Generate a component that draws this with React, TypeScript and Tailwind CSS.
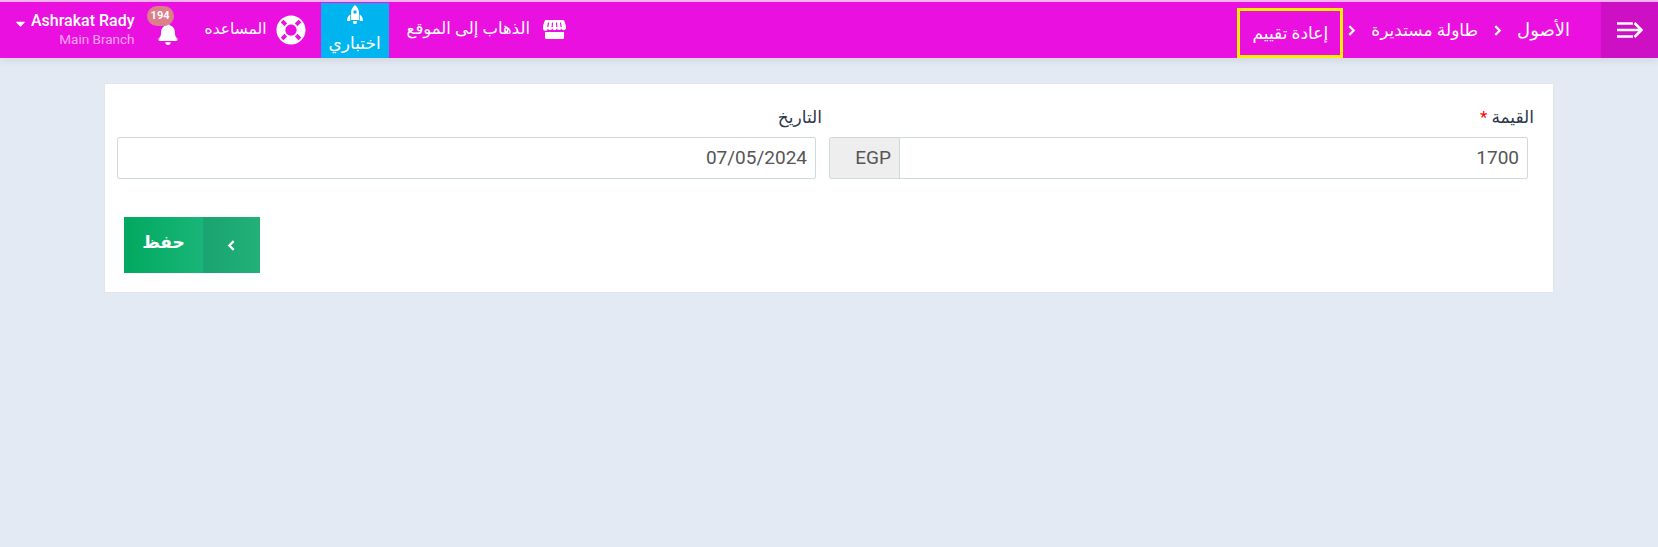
import { FaBell, FaCaretDown, FaLifeRing } from 'react-icons/fa'

const font = "font-['Roboto','Noto_Sans','DejaVu_Sans',sans-serif]"

function Chevron({ dir, size = 11 }: { dir: 'left' | 'right'; size?: number }) {
  return (
    <svg width={size} height={size} viewBox="0 0 10 10" fill="none" stroke="#fff" strokeWidth="2" className="shrink-0">
      <path d={dir === 'right' ? 'M3 1l4 4-4 4' : 'M7 1 3 5l4 4'} />
    </svg>
  )
}

function StoreIcon() {
  return (
    <svg width="23" height="19" viewBox="0 0 23 19" fill="#fff" className="shrink-0">
      <path d="M3 0h17a1.500 1.500 0 0 1 1.300.8L23 6v2.500a2.400 2.400 0 0 1-4.600 0 2.400 2.400 0 0 1-4.500 0 2.400 2.400 0 0 1-4.600 0 2.400 2.400 0 0 1-4.500 0 2.400 2.400 0 0 1-4.800 0V6L1.700.8A1.500 1.500 0 0 1 3 0z" />
      <path d="M2 12h19v5.500a1.500 1.500 0 0 1-1.500 1.500h-16A1.500 1.500 0 0 1 2 17.500z" />
      <path d="M5.500 2.500 4.800 7M9.500 2.500 9.200 7M13.500 2.500l.3 4.500M17.500 2.500l.7 4.500" stroke="#ea10df" strokeWidth="1.200" />
    </svg>
  )
}

function RocketIcon() {
  return (
    <svg width="16" height="20" viewBox="0 0 16 20" fill="#fff" className="shrink-0">
      <path d="M8 0c2.800 2.200 4 5.200 4 8.500V15H4V8.500C4 5.200 5.200 2.200 8 0z" />
      <path d="M3.300 9.500V16H0c0-2.800 1-5 3.300-6.500zM12.700 9.500V16H16c0-2.800-1-5-3.300-6.500z" />
      <path d="M6 16h4l-.6 3H6.600z" />
      <circle cx="8" cy="7" r="1.700" fill="#00b4f0" />
    </svg>
  )
}

function Crumb({ children }: { children: string }) {
  return <span className="text-[17px] leading-none text-white">{children}</span>
}

function Header() {
  return (
    <div className="border-t-2 border-[#f9b5f3] bg-[#ea10df] h-[58px] flex items-stretch shadow-[0_2px_8px_rgba(0,0,0,0.1)] relative">
      {/* Toggle */}
      <div className="w-[57px] bg-[#cd10c3] flex items-center justify-center">
        <svg width="26" height="16" viewBox="0 0 26 16" fill="none" stroke="#fff" strokeWidth="2.600">
          <path d="M0 1.500h16M0 8h24M0 14.500h16" />
          <path d="M17.500 1 24.500 8l-7 7" />
        </svg>
      </div>

      {/* Breadcrumb */}
      <div className="flex items-center pr-[31px]">
        <span className="text-[18px] leading-none text-white">الأصول</span>
        <span className="mx-[14px]">
          <Chevron dir="right" />
        </span>
        <Crumb>طاولة مستديرة</Crumb>
        <span className="mr-[14px] ml-[3px]">
          <Chevron dir="right" />
        </span>
        <div className="w-[106px] h-[50px] mt-[6px] border-[3px] border-[#ffee00] flex items-center justify-center">
          <Crumb>إعادة تقييم</Crumb>
        </div>
      </div>

      {/* Actions */}
      <div className="mr-auto flex items-center pl-[13px]">
        <div className="flex items-center gap-[13px] text-white text-[16.500px] ml-[18px] -mt-[2px]">
          <StoreIcon />
          <span>الذهاب إلى الموقع</span>
        </div>
        <div className="w-[68px] h-[55px] mt-[1px] bg-[#00b4f0] text-white flex flex-col items-center justify-between">
          <span className="mt-[2px]">
            <RocketIcon />
          </span>
          <span className="text-[17px] leading-none mb-[6px]">اختباري</span>
        </div>
        <div className="flex items-center gap-[9px] text-white text-[15.500px] mr-[15px] ml-[26px]">
          <FaLifeRing className="text-[30px]" />
          <span>المساعده</span>
        </div>
        <div className="relative ml-[22px] mt-[8px]">
          <FaBell className="text-white text-[22px]" />
          <span className="absolute -top-[17px] -left-[10px] w-[27px] h-[20px] rounded-full bg-[#dc7f8a] text-white text-[11px] font-bold flex items-center justify-center">
            194
          </span>
        </div>
        <div className="flex items-center gap-[3px]" dir="ltr">
          <FaCaretDown className="text-white text-[15px] -mt-[13px]" />
          <div className="text-right">
            <div className="text-white text-[16px] font-medium leading-[19px]">Ashrakat Rady</div>
            <div className="text-[#ffa4f8] text-[13.500px] leading-[19px]">Main Branch</div>
          </div>
        </div>
      </div>
    </div>
  )
}

export default function App() {
  return (
    <div dir="rtl" className={`${font} min-h-[547px] bg-[#e4eaf3] flex flex-col`}>
      <Header />
      <div className="w-[1450px] mx-auto mt-[25px] h-[210px] bg-white border border-[#dfe5e8] pl-[12px] pr-[25px] pt-[21px]">
        <div className="grid grid-cols-2 gap-x-[13px]">
          <div>
            <label className="block h-[32px] text-[17px] leading-[24px] text-[#2a3547] -mr-[6px]">
              القيمة <span className="text-[#ff0000]">*</span>
            </label>
            <div className="flex h-[42px] border border-[#cfdadd] rounded-[2px]">
              <div className="flex-1 flex items-center px-[8px] text-[19px] text-[#555555]">1700</div>
              <div className="w-[70px] border-r border-[#cfdadd] bg-[#eeeeee] flex items-center justify-start px-[8px] text-[19px] text-[#555555]">
                EGP
              </div>
            </div>
          </div>
          <div>
            <label className="block h-[32px] text-[17px] leading-[24px] text-[#2a3547] -mr-[6px]">التاريخ</label>
            <div className="flex h-[42px] border border-[#cfdadd] rounded-[2px] items-center px-[8px] text-[19px] text-[#555555]">
              07/05/2024
            </div>
          </div>
        </div>
        <div className="flex justify-end mt-[38px] pl-[7px]">
          <button className="flex w-[136px] h-[56px] text-white">
            <span className="w-[57px] h-full bg-[linear-gradient(90deg,#1aa46f,#22b078)] flex items-center justify-center">
              <Chevron dir="left" />
            </span>
            <span className="flex-1 h-full bg-[linear-gradient(90deg,#02a85f,#18b679)] flex items-center justify-center text-[17px] font-bold pb-[4px]">
              حفظ
            </span>
          </button>
        </div>
      </div>
    </div>
  )
}
